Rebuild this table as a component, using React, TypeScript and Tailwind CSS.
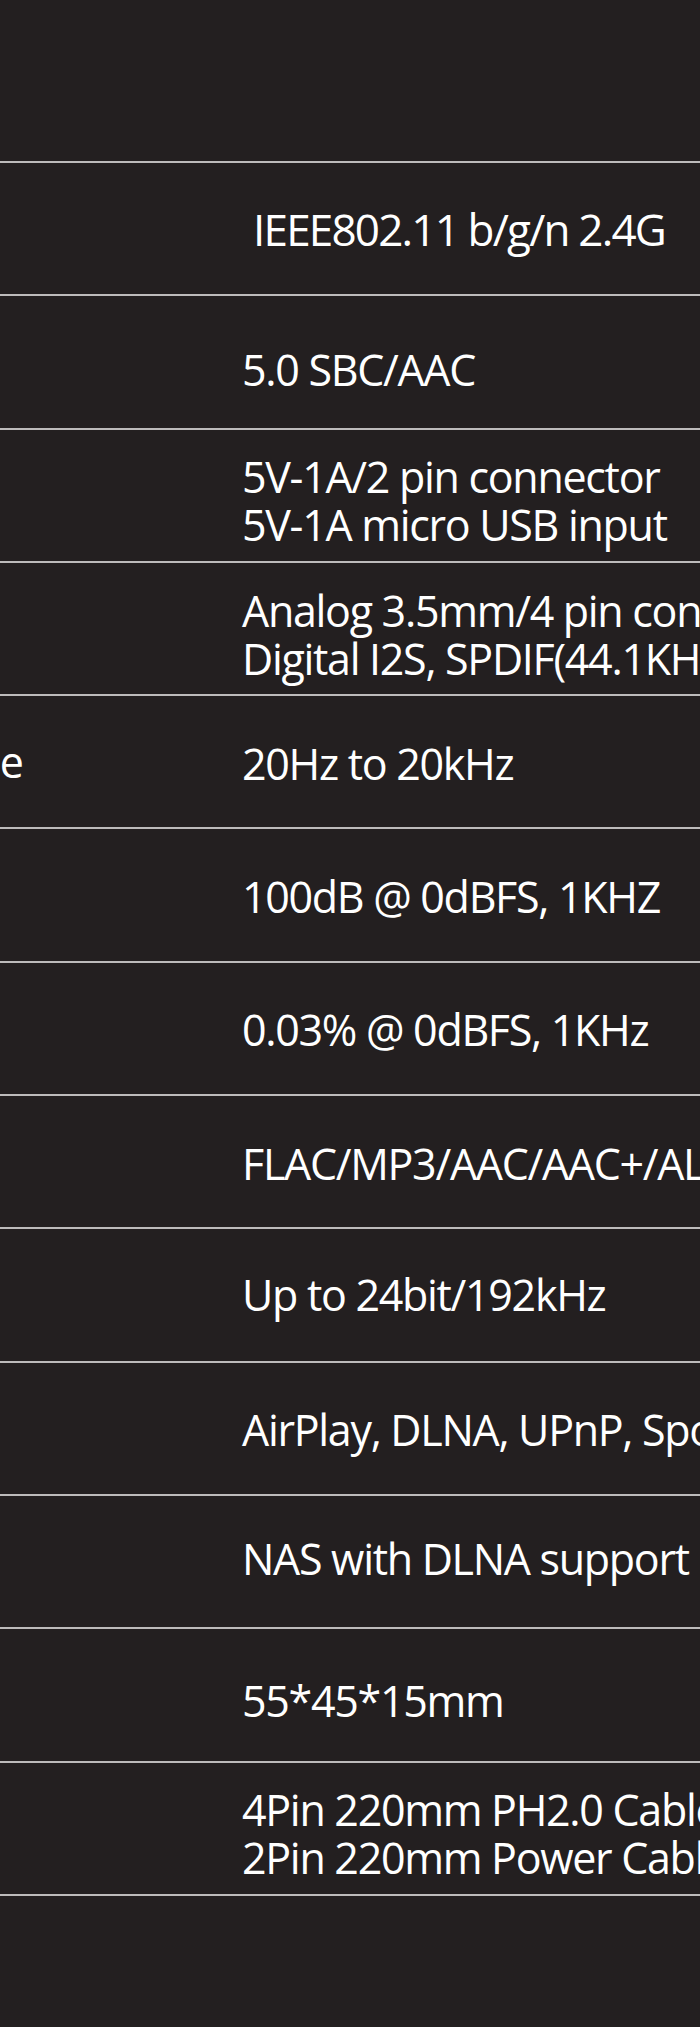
import React from "react";

type Spec = {
  label?: string;
  lines: string[];
  big?: boolean;
  pad: string;
};

const specs: Spec[] = [
  { lines: ["IEEE802.11 b/g/n 2.4G"], big: true, pad: "pt-0" },
  { lines: ["5.0 SBC/AAC"], pad: "pt-[17px]" },
  { lines: ["5V-1A/2 pin connector", "5V-1A micro USB input"], pad: "pt-[12px]" },
  {
    lines: [
      "Analog 3.5mm/4 pin connector",
      "Digital I2S, SPDIF(44.1KHz/48KHz)",
    ],
    pad: "pt-[12px]",
  },
  { label: "Frequency Response", lines: ["20Hz to 20kHz"], pad: "pt-[4px]" },
  { lines: ["100dB @ 0dBFS, 1KHZ"], pad: "pt-[4px]" },
  { lines: ["0.03% @ 0dBFS, 1KHz"], pad: "pt-[4px]" },
  { lines: ["FLAC/MP3/AAC/AAC+/ALAC/APE/WAV"], pad: "pt-[4px]" },
  { lines: ["Up to 24bit/192kHz"], pad: "pt-0" },
  { lines: ["AirPlay, DLNA, UPnP, Spotify Connect"], pad: "pt-[4px]" },
  { lines: ["NAS with DLNA support"], pad: "pb-[6px]" },
  { lines: ["55*45*15mm"], pad: "pt-[12px]" },
  { lines: ["4Pin 220mm PH2.0 Cable", "2Pin 220mm Power Cable"], pad: "pt-[12px]" },
];

export default function App() {
  return (
    <div
      className="w-[700px] h-[2027px] overflow-hidden bg-[#231f20] text-white"
      style={{ fontFamily: '"Open Sans", "Noto Sans", sans-serif' }}
    >
      {/* header area */}
      <div className="h-[161px]" />

      {specs.map((spec, i) => (
        <div
          key={i}
          className="flex h-[133.3px] items-center border-t-[2px] border-[#bdbbbb] box-border"
        >
          {/* label column, mostly cut off on the left */}
          <div className="flex w-[242px] shrink-0 justify-end overflow-hidden pr-[219px]">
            {spec.label && (
              <span className="whitespace-nowrap text-[43px] leading-[48px] tracking-[-1px]">
                {spec.label}
              </span>
            )}
          </div>
          <div
            className={
              spec.big
                ? "whitespace-nowrap pl-[11px] text-[44px] leading-[48px] tracking-[-1.8px]"
                : "whitespace-nowrap text-[43px] leading-[48px] tracking-[-1.3px] " +
                  spec.pad
            }
          >
            {spec.lines.map((l, j) => (
              <div key={j}>{l}</div>
            ))}
          </div>
        </div>
      ))}
      <div className="border-t-[2px] border-[#bdbbbb]" />
    </div>
  );
}
